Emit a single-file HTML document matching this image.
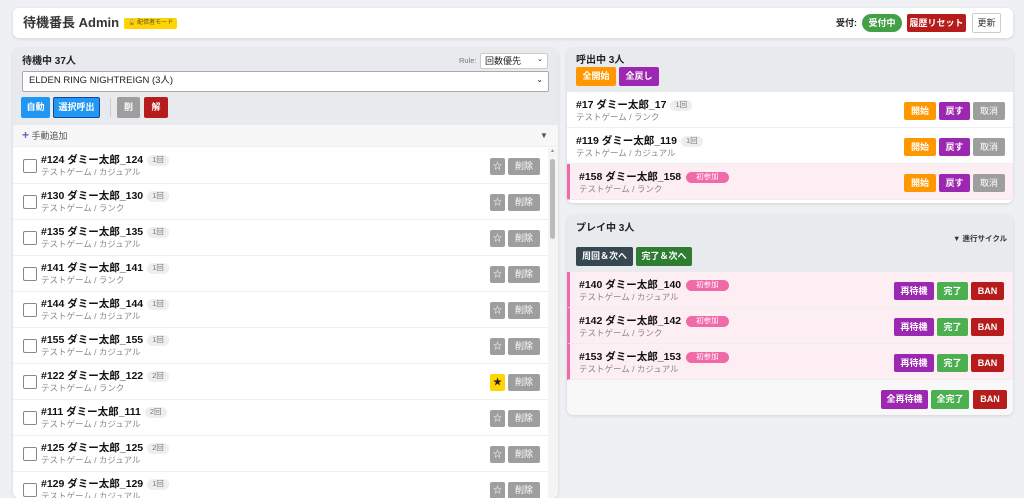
<!DOCTYPE html>
<html><head><meta charset="utf-8"><style>
*{box-sizing:border-box;margin:0;padding:0}
body{width:1024px;height:485px;overflow:hidden;background:#eef0f3;font-family:"Liberation Sans","Noto Sans CJK JP",sans-serif;color:#222;position:relative;line-height:1.15}
.abs{position:absolute}
.card{background:#fff;border-radius:6px;box-shadow:0 1px 3px rgba(0,0,0,.12)}
.btn{position:absolute;color:#fff;font-size:9px;font-weight:bold;display:flex;align-items:center;justify-content:center;border-radius:2px}
.row{position:absolute;left:0;right:0;height:36px;border-bottom:1px solid #eee;background:#fff}
.nm{position:absolute;font-size:10.5px;font-weight:bold;color:#111;white-space:nowrap}
.sub{position:absolute;font-size:8.5px;color:#888;white-space:nowrap}
.cnt{display:inline-block;background:#eee;color:#777;font-size:7.5px;font-weight:normal;padding:1px 5px;border-radius:7px;margin-left:4px;vertical-align:1px}
.new{display:inline-block;background:#f06aa8;color:#fff;font-size:7.5px;font-weight:normal;padding:1px 10px;border-radius:7px;margin-left:5px;vertical-align:1px}
.cb{position:absolute;left:10px;top:11px;width:14px;height:14px;border:1px solid #888;border-radius:2px;background:#fff}
.pink{background:#fdeef3;border-left:3px solid #f06aa8}
</style></head><body>
<div class="card abs" style="left:13px;top:8px;width:1000px;height:30px">
 <div class="abs" style="left:10px;top:8px;font-size:13px;font-weight:bold;color:#333">待機番長 Admin</div>
 <div class="abs" style="left:111px;top:10px;background:#ffd400;font-size:6px;padding:2px 4px;border-radius:2px;color:#553">🔒 配信者モード</div>
 <div class="abs" style="left:823px;top:10px;font-size:9px;font-weight:bold">受付:</div>
 <div class="btn" style="left:849px;top:6px;width:40px;height:18px;background:#43a047;border-radius:9px">受付中</div>
 <div class="btn" style="left:894px;top:6px;width:59px;height:18px;background:#b71c1c">履歴リセット</div>
 <div class="btn" style="left:959px;top:5px;width:29px;height:20px;background:#fff;color:#333;border:1px solid #ccc;font-weight:normal">更新</div>
</div>

<div class="card abs" style="left:13px;top:48px;width:545px;height:450px;overflow:hidden;background:#fff">
 <div class="abs" style="left:0;top:0;width:545px;height:77px;background:#e8eaed"></div>
 <div class="abs" style="left:9px;top:8px;font-size:10px;font-weight:bold">待機中 37人</div>
 <div class="abs" style="left:446px;top:9px;font-size:7.5px;color:#777">Rule:</div>
 <div class="abs" style="left:467px;top:5px;width:68px;height:16px;background:#fff;border:1px solid #ccc;border-radius:2px;font-size:9px;padding:2px 4px">回数優先<span style="position:absolute;right:4px;font-size:7px">⌄</span></div>
 <div class="abs" style="left:9px;top:23px;width:527px;height:21px;background:#fff;border:1px solid #aaa;border-radius:2px;font-size:9.5px;padding:4px 6px">ELDEN RING NIGHTREIGN (3人)<span style="position:absolute;right:5px;top:3px;font-size:8px">⌄</span></div>
 <div class="btn" style="left:8px;top:49px;width:29px;height:21px;background:#2196f3">自動</div>
 <div class="btn" style="left:40px;top:49px;width:47px;height:21px;background:#2196f3;border:1px solid #0d47a1">選択呼出</div>
 <div class="abs" style="left:97px;top:50px;width:1px;height:19px;background:#ccc"></div>
 <div class="btn" style="left:104px;top:49px;width:23px;height:21px;background:#9e9e9e">削</div>
 <div class="btn" style="left:131px;top:49px;width:24px;height:21px;background:#b71c1c">解</div>
 <div class="abs" style="left:0;top:77px;width:545px;height:22px;background:#f7f7f7;border-bottom:1px solid #eee"></div>
 <div class="abs" style="left:9px;top:81px;font-size:9px;color:#555"><span style="color:#7e57c2;font-size:12px;font-weight:bold">+</span> 手動追加</div>
 <div class="abs" style="left:527px;top:83px;font-size:8px;color:#555">▼</div>
 <div class="abs" style="left:0;top:100px;width:535px;height:360px">
  <div class="row" style="top:0"><div class="cb"></div><div class="nm" style="left:28px;top:6px">#124 ダミー太郎_124<span class="cnt">1回</span></div><div class="sub" style="left:28px;top:20px">テストゲーム / カジュアル</div><div class="btn" style="left:477px;top:10px;width:15px;height:17px;background:#9e9e9e">☆</div><div class="btn" style="left:495px;top:10px;width:32px;height:17px;background:#9e9e9e;font-weight:normal">削除</div></div>
  <div class="row" style="top:36px"><div class="cb"></div><div class="nm" style="left:28px;top:6px">#130 ダミー太郎_130<span class="cnt">1回</span></div><div class="sub" style="left:28px;top:20px">テストゲーム / ランク</div><div class="btn" style="left:477px;top:10px;width:15px;height:17px;background:#9e9e9e">☆</div><div class="btn" style="left:495px;top:10px;width:32px;height:17px;background:#9e9e9e;font-weight:normal">削除</div></div>
  <div class="row" style="top:72px"><div class="cb"></div><div class="nm" style="left:28px;top:6px">#135 ダミー太郎_135<span class="cnt">1回</span></div><div class="sub" style="left:28px;top:20px">テストゲーム / カジュアル</div><div class="btn" style="left:477px;top:10px;width:15px;height:17px;background:#9e9e9e">☆</div><div class="btn" style="left:495px;top:10px;width:32px;height:17px;background:#9e9e9e;font-weight:normal">削除</div></div>
  <div class="row" style="top:108px"><div class="cb"></div><div class="nm" style="left:28px;top:6px">#141 ダミー太郎_141<span class="cnt">1回</span></div><div class="sub" style="left:28px;top:20px">テストゲーム / ランク</div><div class="btn" style="left:477px;top:10px;width:15px;height:17px;background:#9e9e9e">☆</div><div class="btn" style="left:495px;top:10px;width:32px;height:17px;background:#9e9e9e;font-weight:normal">削除</div></div>
  <div class="row" style="top:144px"><div class="cb"></div><div class="nm" style="left:28px;top:6px">#144 ダミー太郎_144<span class="cnt">1回</span></div><div class="sub" style="left:28px;top:20px">テストゲーム / カジュアル</div><div class="btn" style="left:477px;top:10px;width:15px;height:17px;background:#9e9e9e">☆</div><div class="btn" style="left:495px;top:10px;width:32px;height:17px;background:#9e9e9e;font-weight:normal">削除</div></div>
  <div class="row" style="top:180px"><div class="cb"></div><div class="nm" style="left:28px;top:6px">#155 ダミー太郎_155<span class="cnt">1回</span></div><div class="sub" style="left:28px;top:20px">テストゲーム / カジュアル</div><div class="btn" style="left:477px;top:10px;width:15px;height:17px;background:#9e9e9e">☆</div><div class="btn" style="left:495px;top:10px;width:32px;height:17px;background:#9e9e9e;font-weight:normal">削除</div></div>
  <div class="row" style="top:216px"><div class="cb"></div><div class="nm" style="left:28px;top:6px">#122 ダミー太郎_122<span class="cnt">2回</span></div><div class="sub" style="left:28px;top:20px">テストゲーム / ランク</div><div class="btn" style="left:477px;top:10px;width:15px;height:17px;background:#ffd400;color:#222">★</div><div class="btn" style="left:495px;top:10px;width:32px;height:17px;background:#9e9e9e;font-weight:normal">削除</div></div>
  <div class="row" style="top:252px"><div class="cb"></div><div class="nm" style="left:28px;top:6px">#111 ダミー太郎_111<span class="cnt">2回</span></div><div class="sub" style="left:28px;top:20px">テストゲーム / カジュアル</div><div class="btn" style="left:477px;top:10px;width:15px;height:17px;background:#9e9e9e">☆</div><div class="btn" style="left:495px;top:10px;width:32px;height:17px;background:#9e9e9e;font-weight:normal">削除</div></div>
  <div class="row" style="top:288px"><div class="cb"></div><div class="nm" style="left:28px;top:6px">#125 ダミー太郎_125<span class="cnt">2回</span></div><div class="sub" style="left:28px;top:20px">テストゲーム / カジュアル</div><div class="btn" style="left:477px;top:10px;width:15px;height:17px;background:#9e9e9e">☆</div><div class="btn" style="left:495px;top:10px;width:32px;height:17px;background:#9e9e9e;font-weight:normal">削除</div></div>
  <div class="row" style="top:324px"><div class="cb"></div><div class="nm" style="left:28px;top:6px">#129 ダミー太郎_129<span class="cnt">1回</span></div><div class="sub" style="left:28px;top:20px">テストゲーム / カジュアル</div><div class="btn" style="left:477px;top:10px;width:15px;height:17px;background:#9e9e9e">☆</div><div class="btn" style="left:495px;top:10px;width:32px;height:17px;background:#9e9e9e;font-weight:normal">削除</div></div>
 </div>
 <div class="abs" style="left:535px;top:100px;width:10px;height:350px;background:#f4f4f4"></div>
 <div class="abs" style="left:537px;top:111px;width:5px;height:80px;background:#bbb;border-radius:3px"></div>
 <div class="abs" style="left:537px;top:101px;font-size:5px;color:#888">▲</div>
</div>

<div class="card abs" style="left:567px;top:48px;width:446px;height:155px;overflow:hidden">
 <div class="abs" style="left:0;top:0;width:446px;height:44px;background:#e8eaed"></div>
 <div class="abs" style="left:9px;top:7px;font-size:10px;font-weight:bold">呼出中 3人</div>
 <div class="btn" style="left:9px;top:19px;width:40px;height:19px;background:#ff9800">全開始</div>
 <div class="btn" style="left:52px;top:19px;width:40px;height:19px;background:#9c27b0">全戻し</div>
 <div class="row" style="top:44px"><div class="nm" style="left:9px;top:7px">#17 ダミー太郎_17<span class="cnt">1回</span></div><div class="sub" style="left:9px;top:21px">テストゲーム / ランク</div><div class="btn" style="left:337px;top:10px;width:32px;height:18px;background:#ff9800">開始</div><div class="btn" style="left:372px;top:10px;width:31px;height:18px;background:#9c27b0">戻す</div><div class="btn" style="left:406px;top:10px;width:32px;height:18px;background:#9e9e9e;font-weight:normal">取消</div></div>
 <div class="row" style="top:80px"><div class="nm" style="left:9px;top:7px">#119 ダミー太郎_119<span class="cnt">1回</span></div><div class="sub" style="left:9px;top:21px">テストゲーム / カジュアル</div><div class="btn" style="left:337px;top:10px;width:32px;height:18px;background:#ff9800">開始</div><div class="btn" style="left:372px;top:10px;width:31px;height:18px;background:#9c27b0">戻す</div><div class="btn" style="left:406px;top:10px;width:32px;height:18px;background:#9e9e9e;font-weight:normal">取消</div></div>
 <div class="row pink" style="top:116px"><div class="nm" style="left:9px;top:7px">#158 ダミー太郎_158<span class="new">初参加</span></div><div class="sub" style="left:9px;top:21px">テストゲーム / ランク</div><div class="btn" style="left:334px;top:10px;width:32px;height:18px;background:#ff9800">開始</div><div class="btn" style="left:369px;top:10px;width:31px;height:18px;background:#9c27b0">戻す</div><div class="btn" style="left:403px;top:10px;width:32px;height:18px;background:#9e9e9e;font-weight:normal">取消</div></div>
</div>

<div class="card abs" style="left:567px;top:215px;width:446px;height:200px;overflow:hidden;background:#f8f8f8">
 <div class="abs" style="left:0;top:0;width:446px;height:57px;background:#e8eaed"></div>
 <div class="abs" style="left:9px;top:8px;font-size:10px;font-weight:bold">プレイ中 3人</div>
 <div class="abs" style="left:386px;top:20px;font-size:7.5px;font-weight:bold;color:#333">▼ 進行サイクル</div>
 <div class="btn" style="left:9px;top:32px;width:57px;height:19px;background:#37474f">周回＆次へ</div>
 <div class="btn" style="left:69px;top:32px;width:56px;height:19px;background:#2e7d32">完了＆次へ</div>
 <div class="row pink" style="top:57px"><div class="nm" style="left:9px;top:7px">#140 ダミー太郎_140<span class="new">初参加</span></div><div class="sub" style="left:9px;top:21px">テストゲーム / カジュアル</div><div class="btn" style="left:324px;top:10px;width:40px;height:18px;background:#9c27b0">再待機</div><div class="btn" style="left:367px;top:10px;width:31px;height:18px;background:#4caf50">完了</div><div class="btn" style="left:401px;top:10px;width:33px;height:18px;background:#b71c1c">BAN</div></div>
 <div class="row pink" style="top:93px"><div class="nm" style="left:9px;top:7px">#142 ダミー太郎_142<span class="new">初参加</span></div><div class="sub" style="left:9px;top:21px">テストゲーム / ランク</div><div class="btn" style="left:324px;top:10px;width:40px;height:18px;background:#9c27b0">再待機</div><div class="btn" style="left:367px;top:10px;width:31px;height:18px;background:#4caf50">完了</div><div class="btn" style="left:401px;top:10px;width:33px;height:18px;background:#b71c1c">BAN</div></div>
 <div class="row pink" style="top:129px"><div class="nm" style="left:9px;top:7px">#153 ダミー太郎_153<span class="new">初参加</span></div><div class="sub" style="left:9px;top:21px">テストゲーム / カジュアル</div><div class="btn" style="left:324px;top:10px;width:40px;height:18px;background:#9c27b0">再待機</div><div class="btn" style="left:367px;top:10px;width:31px;height:18px;background:#4caf50">完了</div><div class="btn" style="left:401px;top:10px;width:33px;height:18px;background:#b71c1c">BAN</div></div>
 <div class="btn" style="left:314px;top:175px;width:47px;height:19px;background:#9c27b0">全再待機</div>
 <div class="btn" style="left:364px;top:175px;width:38px;height:19px;background:#4caf50">全完了</div>
 <div class="btn" style="left:406px;top:175px;width:34px;height:19px;background:#b71c1c">BAN</div>
</div>
</body></html>
